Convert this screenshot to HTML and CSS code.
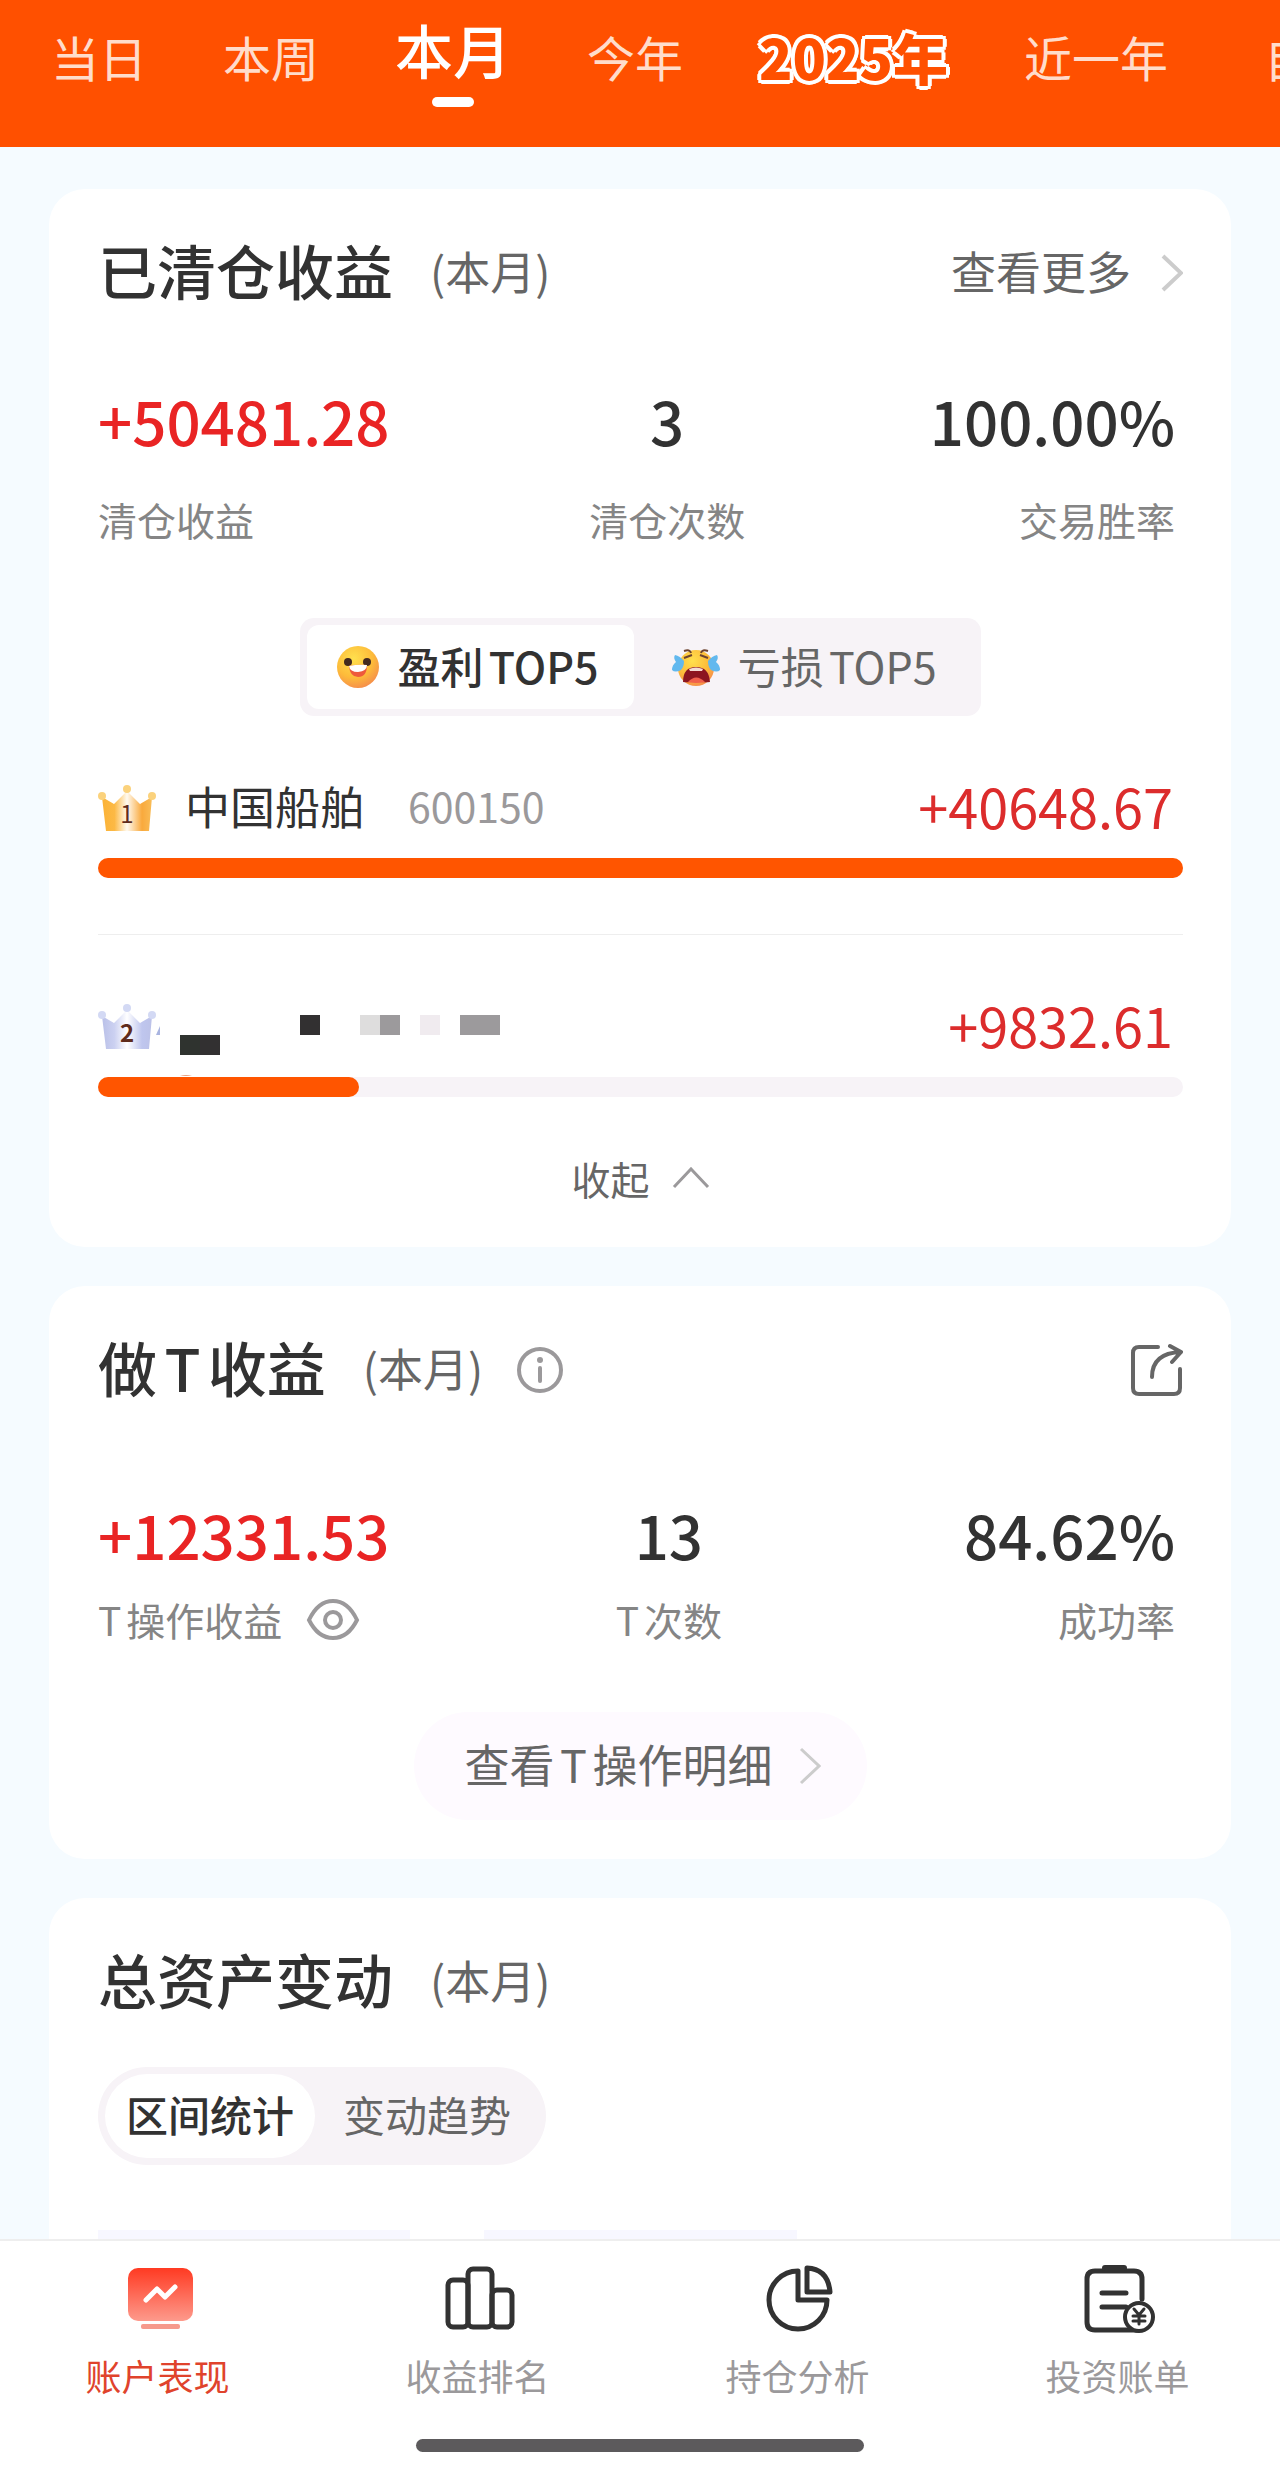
FILE: index.html
```html
<!DOCTYPE html>
<html lang="zh-CN">
<head>
    <meta charset="UTF-8">
    <meta name="viewport" content="width=device-width, initial-scale=1.0">
    <title>账户表现</title>
    <link rel="stylesheet" href="styles.css">
</head>
<body>
    <!-- Period tabs -->
    <header class="period-bar">
        <button type="button" class="period">当日</button>
        <button type="button" class="period">本周</button>
        <button type="button" class="period active">本月</button>
        <button type="button" class="period">今年</button>
        <button type="button" class="period year-badge">2025年</button>
        <button type="button" class="period">近一年</button>
        <button type="button" class="period custom">自定义</button>
    </header>

    <main class="content">
        <!-- Closed positions -->
        <section class="card">
            <div class="card-head">
                <h2>已清仓收益</h2>
                <span class="range">(本月)</span>
                <a href="#" class="more">查看更多
                    <svg width="24" height="38" viewBox="0 0 24 38" fill="none" stroke="#cccccc" stroke-width="4"><path d="M4 2L22 19L4 36"/></svg>
                </a>
            </div>

            <div class="stats">
                <div class="stat">
                    <span class="value up">+50481.28</span>
                    <span class="label">清仓收益</span>
                </div>
                <div class="stat">
                    <span class="value">3</span>
                    <span class="label">清仓次数</span>
                </div>
                <div class="stat">
                    <span class="value">100.00%</span>
                    <span class="label">交易胜率</span>
                </div>
            </div>

            <div class="top-switch">
                <button type="button" class="active">
                    <svg width="44" height="44" viewBox="0 0 44 44">
                        <defs>
                            <radialGradient id="face" cx="0.4" cy="0.3" r="0.75">
                                <stop offset="0" stop-color="#ffe04e"/>
                                <stop offset="0.6" stop-color="#fdbb3a"/>
                                <stop offset="1" stop-color="#f58a4c"/>
                            </radialGradient>
                        </defs>
                        <circle cx="22" cy="22" r="21" fill="url(#face)"/>
                        <circle cx="12" cy="17" r="4" fill="#43291f"/>
                        <circle cx="31" cy="17" r="4" fill="#43291f"/>
                        <path d="M13 21Q22 19 31 20Q31 32 22 32Q14 32 13 21Z" fill="#ee5a3c"/>
                        <path d="M13 21Q22 19 31 20Q31 26 22 27Q14 27 13 21Z" fill="#fff"/>
                    </svg>
                    <span>盈利TOP5</span>
                </button>
                <button type="button">
                    <svg width="50" height="44" viewBox="0 0 50 44">
                        <circle cx="25" cy="23" r="18" fill="url(#face)"/>
                        <path d="M13 6Q19 4 20 8M37 6Q31 4 30 8M13 13L21 10M37 13L29 10" stroke="#6d4330" stroke-width="2" fill="none"/>
                        <path d="M4 10Q9 11 13 16Q13 22 10 25Q4 28 1 25Q1 20 5 17Q2 13 4 10Z" fill="#62b8ee"/>
                        <path d="M46 10Q41 11 37 16Q37 22 40 25Q46 28 49 25Q49 20 45 17Q48 13 46 10Z" fill="#62b8ee"/>
                        <path d="M12 37Q12 22 25 22Q38 22 39 37Q32 38 25 36Q18 38 12 37Z" fill="#8c1620"/>
                        <path d="M18 24Q25 21 32 24L31 26H19Z" fill="#f3dcd4"/>
                        <path d="M17 37Q25 28 34 37Q25 39 17 37Z" fill="#f0604c"/>
                    </svg>
                    <span>亏损TOP5</span>
                </button>
            </div>

            <ul class="rank-list">
                <li>
                    <div class="rank-row">
                        <svg width="58" height="52" viewBox="0 -6 58 52">
                            <defs>
                                <linearGradient id="gold">
                                    <stop offset="0" stop-color="#fbb236"/>
                                    <stop offset="0.25" stop-color="#fcb945"/>
                                    <stop offset="0.5" stop-color="#fffaf0"/>
                                    <stop offset="0.8" stop-color="#f9a93c"/>
                                    <stop offset="1" stop-color="#f9bd58"/>
                                </linearGradient>
                            </defs>
                            <path d="M4 12L16 19L29 6L42 19L54 12L51 46H8Z" fill="url(#gold)"/>
                            <circle cx="4" cy="11" r="4" fill="#fbd27c"/>
                            <circle cx="29" cy="4" r="4" fill="#fbd27c"/>
                            <circle cx="54" cy="11" r="4" fill="#fbd27c"/>
                            <text x="29" y="38" class="crown-no">1</text>
                        </svg>
                        <span class="stock">中国船舶</span>
                        <span class="code">600150</span>
                        <span class="amount">+40648.67</span>
                    </div>
                    <div class="bar"><div class="fill" style="width: 100%"></div></div>
                </li>
                <li>
                    <div class="rank-row">
                        <svg width="58" height="52" viewBox="0 -6 58 52">
                            <defs>
                                <linearGradient id="silver">
                                    <stop offset="0" stop-color="#b9c0e8"/>
                                    <stop offset="0.25" stop-color="#ccd1f1"/>
                                    <stop offset="0.5" stop-color="#ffffff"/>
                                    <stop offset="0.8" stop-color="#bfc6ee"/>
                                    <stop offset="1" stop-color="#bcc2e8"/>
                                </linearGradient>
                            </defs>
                            <path d="M4 12L16 19L29 6L42 19L54 12L51 45H8Z" fill="url(#silver)"/>
                            <circle cx="4" cy="11" r="4" fill="#d3d9f4"/>
                            <circle cx="29" cy="4" r="4" fill="#d3d9f4"/>
                            <circle cx="54" cy="11" r="4" fill="#d3d9f4"/>
                            <text x="29" y="38" class="crown-no bold">2</text>
                        </svg>
                        <!-- hidden stock name -->
                        <svg class="mask" width="346" height="60" viewBox="0 0 346 60">
                            <path d="M0 41L4 32V41Z" fill="#a9b4e0"/>
                            <rect x="24" y="41" width="20" height="20" fill="#2f332f"/>
                            <rect x="44" y="41" width="20" height="20" fill="#323031"/>
                            <rect x="144" y="21" width="20" height="20" fill="#323031"/>
                            <rect x="204" y="21" width="20" height="20" fill="#dedddd"/>
                            <rect x="224" y="21" width="20" height="20" fill="#9c9a9c"/>
                            <rect x="264" y="21" width="20" height="20" fill="#f0ebef"/>
                            <rect x="304" y="21" width="40" height="20" fill="#9c9a9c"/>
                            <path d="M24 82Q30 80 36 82Z" fill="#e8a080"/>
                        </svg>
                        <span class="amount">+9832.61</span>
                    </div>
                    <div class="bar"><div class="fill" style="width: 24.1%"></div></div>
                </li>
            </ul>

            <button type="button" class="collapse">收起
                <svg width="38" height="22" viewBox="0 0 38 22" fill="none" stroke="#9b999b" stroke-width="3"><path d="M2 20L19 2L36 20"/></svg>
            </button>
        </section>

        <!-- T trades -->
        <section class="card card-t">
            <div class="card-head">
                <h2>做T收益</h2>
                <span class="range">(本月)</span>
                <button type="button" class="icon-btn info" aria-label="说明">
                    <svg width="46" height="46" viewBox="0 0 46 46" fill="none" stroke="#9b999b" stroke-width="4" stroke-linecap="round">
                        <circle cx="23" cy="23" r="21"/>
                        <path d="M23 21V34"/>
                        <circle cx="23" cy="13" r="3" fill="#9b999b" stroke="none"/>
                    </svg>
                </button>
                <button type="button" class="icon-btn share" aria-label="分享">
                    <svg width="54" height="54" viewBox="0 0 54 54" fill="none" stroke="#666666" stroke-width="4" stroke-linecap="round" stroke-linejoin="round">
                        <path d="M29 4H10Q4 4 4 10V45Q4 51 10 51H45Q51 51 51 45V26"/>
                        <path d="M23 34Q23 10 52 9M41 3L52 9L43 19"/>
                    </svg>
                </button>
            </div>

            <div class="stats">
                <div class="stat">
                    <span class="value up">+12331.53</span>
                    <span class="label">T操作收益
                        <svg width="54" height="42" viewBox="0 0 54 42" fill="none" stroke="#9b999b" stroke-width="4">
                            <path d="M3 22Q12 3 27 3Q42 3 51 22Q42 40 27 40Q12 40 3 22Z"/>
                            <circle cx="27" cy="22" r="8"/>
                        </svg>
                    </span>
                </div>
                <div class="stat">
                    <span class="value">13</span>
                    <span class="label">T次数</span>
                </div>
                <div class="stat">
                    <span class="value">84.62%</span>
                    <span class="label">成功率</span>
                </div>
            </div>

            <button type="button" class="detail-btn"><span>查看T操作明细</span>
                <svg width="24" height="38" viewBox="0 0 24 38" fill="none" stroke="#cccccc" stroke-width="3"><path d="M4 2L22 19L4 36"/></svg>
            </button>
        </section>

        <!-- Total assets -->
        <section class="card">
            <div class="card-head">
                <h2>总资产变动</h2>
                <span class="range">(本月)</span>
            </div>
            <div class="segment">
                <button type="button" class="active">区间统计</button>
                <button type="button">变动趋势</button>
            </div>
            <div class="tiles">
                <div class="tile"></div>
                <div class="tile"></div>
            </div>
        </section>
    </main>

    <!-- Bottom navigation -->
    <nav class="bottom-nav">
        <div class="nav-items">
            <a href="#" class="active">
                <svg width="72" height="72" viewBox="0 0 72 72">
                    <defs>
                        <linearGradient id="screen" x2="0" y2="1">
                            <stop offset="0" stop-color="#ff3a22"/>
                            <stop offset="1" stop-color="#fd9a8c"/>
                        </linearGradient>
                    </defs>
                    <rect x="4" y="5" width="65" height="53" rx="10" fill="url(#screen)"/>
                    <path d="M22 37L33 26L41 34L51 24" fill="none" stroke="#fff" stroke-width="5" stroke-linecap="round" stroke-linejoin="round"/>
                    <rect x="17" y="61" width="39" height="5" rx="2" fill="#f69a8c"/>
                </svg>
                <span>账户表现</span>
            </a>
            <a href="#">
                <svg width="72" height="72" viewBox="0 0 72 72" fill="none" stroke="#323232" stroke-width="5">
                    <rect x="4" y="17" width="20" height="47" rx="5"/>
                    <rect x="24" y="6" width="24" height="58" rx="5"/>
                    <rect x="48" y="27" width="20" height="37" rx="5"/>
                </svg>
                <span>收益排名</span>
            </a>
            <a href="#">
                <svg width="72" height="72" viewBox="0 0 72 72" fill="none" stroke="#323232" stroke-width="5" stroke-linejoin="round">
                    <path d="M34 8A29 29 0 1 0 63 37H34Z"/>
                    <path d="M43 5Q64 6 66 29H43Z"/>
                </svg>
                <span>持仓分析</span>
            </a>
            <a href="#">
                <svg width="72" height="72" viewBox="0 0 72 72" fill="none" stroke="#323232" stroke-width="5" stroke-linecap="round">
                    <path d="M58 36V16Q58 8 50 8H11Q3 8 3 16V59Q3 67 11 67H54"/>
                    <path d="M21 5H40" stroke-width="6"/>
                    <path d="M18 30H42M18 44H42"/>
                    <circle cx="55" cy="54" r="14" fill="#fff" stroke-width="4"/>
                    <path d="M50 46L55 52L60 46M55 52V61M49 53H61M49 58H61" stroke-width="3"/>
                </svg>
                <span>投资账单</span>
            </a>
        </div>
        <div class="home-indicator"></div>
    </nav>
</body>
</html>
```

FILE: styles.css
```css
/* Global styles */
* {
    box-sizing: border-box;
}
body {
    margin: 0;
    height: 100vh;
    display: flex;
    flex-direction: column;
    font-family: "Noto Sans CJK SC", "Noto Sans", sans-serif;
    color: #323232;
    background: #f5fbff;
    overflow: hidden;
    text-autospace: normal;
}
button {
    padding: 0;
    border: none;
    background: none;
    font-family: inherit;
    color: inherit;
    cursor: pointer;
    text-autospace: normal;
}
a {
    color: inherit;
    text-decoration: none;
}
svg {
    display: block;
    flex-shrink: 0;
}

/* Period tabs */
.period-bar {
    display: flex;
    flex-shrink: 0;
    align-items: flex-start;
    gap: 76px;
    padding: 20px 0 40px 51px;
    background: #ff5000;
    overflow: hidden;
}
.period {
    flex-shrink: 0;
    font-size: 48px;
    line-height: 72px;
    color: #ffdccb;
    white-space: nowrap;
}
.period.active {
    font-size: 58px;
    font-weight: 500;
    line-height: 58px;
    color: #fff;
}
.period.active::after {
    content: "";
    display: block;
    width: 42px;
    height: 10px;
    margin: 19px auto 0;
    border-radius: 5px;
    background: #fff;
}
.period.year-badge {
    font-size: 55px;
    font-weight: 900;
    font-style: oblique 6deg;
    color: #ff5000;
    text-autospace: no-autospace;
    -webkit-text-stroke: 5px #ff5000;
    paint-order: stroke fill;
    text-shadow: 4px 0 #fff, -4px 0 #fff, 0 4px #fff, 0 -4px #fff,
        3px 3px #fff, -3px 3px #fff, 3px -3px #fff, -3px -3px #fff;
}
.period.custom {
    margin-left: 20px;
}

/* Cards */
.content {
    flex: 1;
    min-height: 0;
    padding: 42px 49px 0;
    overflow: hidden;
}
.card {
    margin-bottom: 39px;
    padding: 41px 48px 39px 49px;
    border-radius: 36px;
    background: #fff;
}
.card-head {
    display: flex;
    align-items: center;
    height: 80px;
}
.card-head h2 {
    margin: 0 37px 0 0;
    font-size: 59px;
    font-weight: 500;
    line-height: 80px;
}
.card-head svg {
    margin-top: 6px;
}
.range {
    font-size: 45px;
    color: #666;
}
.more {
    display: flex;
    align-items: center;
    gap: 28px;
    margin-left: auto;
    font-size: 45px;
    color: #666;
}
.icon-btn.info {
    margin-left: 34px;
}
.icon-btn.share {
    margin-left: auto;
}

/* Stats */
.stats {
    display: grid;
    grid-template-columns: 8fr auto 7fr;
    margin-top: 74px;
    padding-right: 8px;
}
.stat {
    display: flex;
    flex-direction: column;
    align-items: center;
    gap: 35px;
}
.stat:first-child {
    align-items: flex-start;
}
.stat:last-child {
    align-items: flex-end;
}
.value {
    font-size: 60px;
    font-weight: 500;
    line-height: 72px;
}
.value.up {
    color: #e92424;
}
.label {
    display: flex;
    align-items: center;
    gap: 24px;
    font-size: 39px;
    line-height: 56px;
    color: #858585;
}
.card-t .stats {
    margin-top: 91px;
}
.card-t .stat {
    gap: 21px;
}

/* Profit / loss switch */
.top-switch {
    display: flex;
    width: fit-content;
    height: 98px;
    margin: 71px auto 0;
    padding: 7px;
    border-radius: 14px;
    background: #f7f3f7;
}
.top-switch button {
    display: flex;
    align-items: center;
    gap: 17px;
    padding: 0 37px;
    border-radius: 12px;
    font-size: 43px;
    color: #666;
}
.top-switch button.active {
    padding: 0 35px 0 29px;
    font-weight: 500;
    color: #323232;
    background: #fff;
}
.top-switch span,
.detail-btn span {
    padding-bottom: 5px;
}

/* Ranking */
.rank-list {
    margin: 59px 0 0;
    padding: 0;
    list-style: none;
}
.rank-list li + li {
    margin-top: 56px;
    padding-top: 59px;
    border-top: 1px solid #eee;
}
.rank-row {
    display: flex;
    align-items: center;
    height: 60px;
    padding-right: 10px;
}
.crown-no {
    font-size: 24px;
    text-anchor: middle;
    fill: #5f2c1c;
}
.crown-no.bold {
    font-weight: 700;
}
.mask {
    overflow: visible;
}
.stock {
    margin-left: 29px;
    font-size: 45px;
}
.code {
    margin-left: 43px;
    font-size: 41px;
    color: #9b999b;
}
.amount {
    margin-left: auto;
    font-size: 54px;
    color: #dc2c2c;
}
.bar {
    height: 20px;
    margin-top: 23px;
    border-radius: 10px;
    background: #f7f3f7;
}
.fill {
    height: 100%;
    border-radius: 10px;
    background: #ff5500;
}
.collapse {
    display: flex;
    align-items: center;
    gap: 22px;
    margin: 53px auto 2px;
    font-size: 39px;
    line-height: 56px;
    color: #666;
}

/* Detail button */
.detail-btn {
    display: flex;
    align-items: center;
    gap: 24px;
    height: 108px;
    margin: 65px auto 0;
    padding: 0 46px 0 50px;
    border-radius: 54px;
    font-size: 45px;
    color: #666;
    background: #fefaff;
}

/* Asset segment */
.segment {
    display: flex;
    width: fit-content;
    height: 98px;
    margin-top: 48px;
    padding: 7px;
    border-radius: 49px;
    background: #f7f3f7;
}
.segment button {
    padding: 0 28px 5px;
    border-radius: 42px;
    font-size: 42px;
    color: #666;
}
.segment button.active {
    padding: 0 21px 5px;
    font-weight: 500;
    color: #323232;
    background: #fff;
}
.tiles {
    display: grid;
    grid-template-columns: repeat(3, 1fr);
    gap: 74px;
    margin-top: 65px;
}
.tile {
    height: 160px;
    background: #f7f7ff;
}

/* Bottom navigation */
.bottom-nav {
    flex-shrink: 0;
    padding: 22px 0 19px;
    border-top: 2px solid #eee;
    background: #fff;
}
.nav-items {
    display: grid;
    grid-template-columns: repeat(4, 1fr);
}
.nav-items a {
    display: flex;
    flex-direction: column;
    align-items: center;
    gap: 16px;
    font-size: 36px;
    line-height: 48px;
    color: #9b999b;
}
.nav-items span {
    padding-right: 5px;
}
.nav-items a.active {
    color: #e0432c;
}
.home-indicator {
    width: 35%;
    height: 13px;
    margin: 40px auto 0;
    border-radius: 7px;
    background: #5c5a5c;
}
```
